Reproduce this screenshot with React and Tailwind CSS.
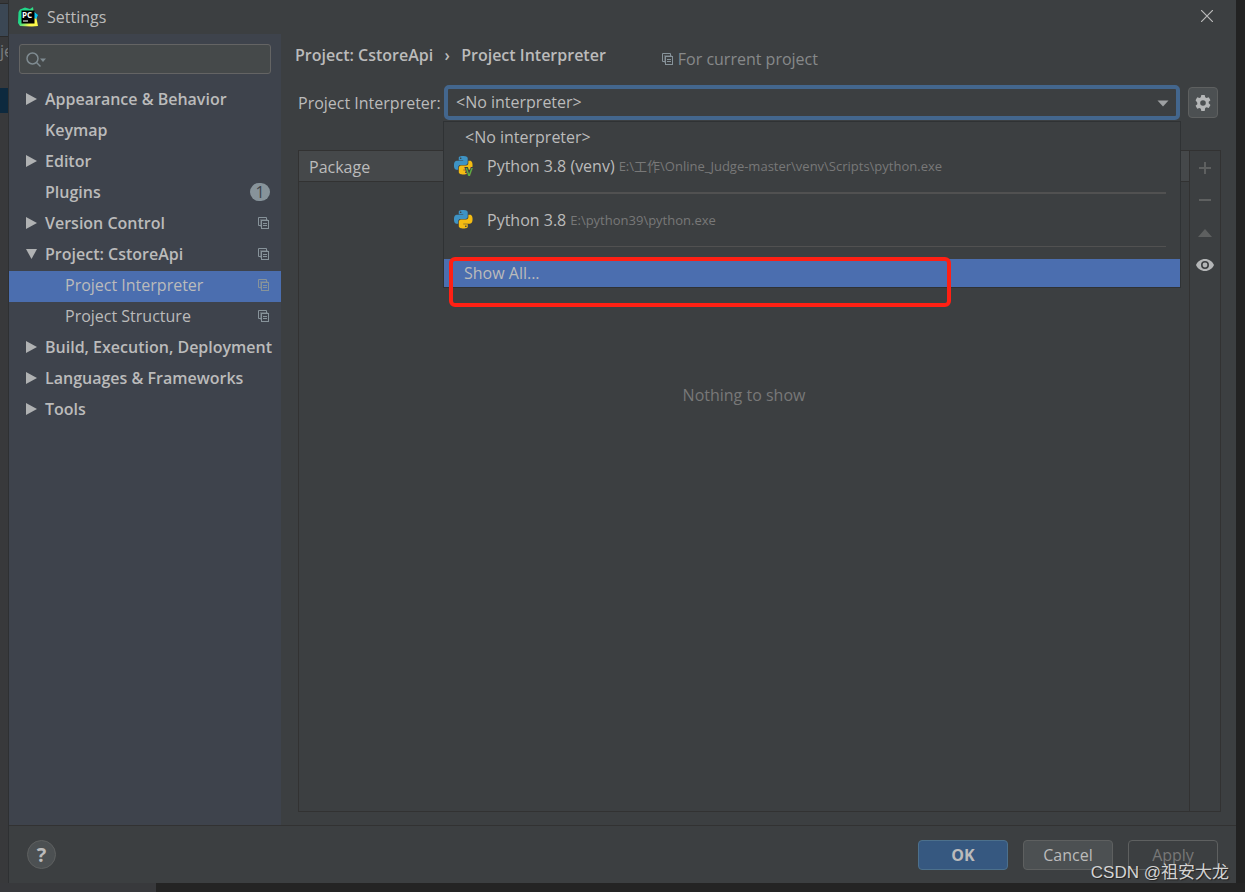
import { useState } from 'react';
import clsx from 'clsx';

const NAV = [
  { label: 'Appearance & Behavior', arrow: 'right' },
  { label: 'Keymap' },
  { label: 'Editor', arrow: 'right' },
  { label: 'Plugins', badge: 1 },
  { label: 'Version Control', arrow: 'right', perProject: true },
  { label: 'Project: CstoreApi', arrow: 'down', perProject: true },
  { label: 'Project Interpreter', child: true, perProject: true },
  { label: 'Project Structure', child: true, perProject: true },
  { label: 'Build, Execution, Deployment', arrow: 'right' },
  { label: 'Languages & Frameworks', arrow: 'right' },
  { label: 'Tools', arrow: 'right' },
];

function PyCharmIcon() {
  return (
    <svg className="w-5 h-5 shrink-0" viewBox="0 0 20 20">
      <defs>
        <linearGradient id="pc" x1="0" y1="0.2" x2="1" y2="1">
          <stop offset="0.35" stopColor="#21d789" />
          <stop offset="0.7" stopColor="#fcf84a" />
        </linearGradient>
      </defs>
      <path d="M2 2.500 7 .5l5 1.500L15 0l.5 4L19 8l-.5 3.500L20 19l-6 .5L2 19l-2-3L.5 5z" fill="url(#pc)" />
      <path d="M15.500 4.500 20 8l-2 4-2-1z" fill="#07c3f2" />
      <rect x="3.500" y="3.500" width="13" height="13" fill="#000" />
      <text x="4" y="10.500" fontSize="8" fontWeight="700" fontFamily="Open Sans, sans-serif" fill="#fff">PC</text>
      <rect x="5" y="13.500" width="5" height="1" fill="#fff" />
    </svg>
  );
}

function CopyIcon({ className }) {
  return (
    <svg className={clsx('w-3 h-3 shrink-0', className)} viewBox="0 0 12 12" fill="none" stroke="currentColor">
      <path d="M3 8.500H.5v-8h8V3" />
      <path d="M3 9.500h-.5v-7H9.500v1" opacity="0.45" />
      <rect x="3.500" y="3.500" width="7" height="8" />
      <path d="M5 6.500h4M5 8.500h4" />
    </svg>
  );
}

function Arrow({ dir }) {
  return (
    <svg className="w-3 h-3" viewBox="0 0 12 12" fill="#b0b2b3">
      {dir === 'down' ? <path d="M1 1h11L6.500 11z" /> : <path d="M1 0v12L12 6z" />}
    </svg>
  );
}

function PythonIcon({ venv }) {
  return (
    <svg className="w-5 h-5 shrink-0" viewBox="0 0 26 26">
      <path
        fill="#3e93c4"
        d="M14.25.18l.9.2.73.26.59.3.45.32.34.34.25.34.16.33.1.3.04.26.02.2-.01.13V8.5l-.05.63-.13.55-.21.46-.26.38-.3.31-.33.25-.35.19-.35.14-.33.1-.3.07-.26.04-.21.02H8.77l-.69.05-.59.14-.5.22-.41.27-.33.32-.27.35-.2.36-.15.37-.1.35-.07.32-.04.27-.02.21v3.06H3.17l-.21-.03-.28-.07-.32-.12-.35-.18-.36-.26-.36-.36-.35-.46-.32-.59-.28-.73-.21-.88-.14-1.05-.05-1.23.06-1.22.16-1.04.24-.87.32-.71.36-.57.4-.44.42-.33.42-.24.4-.16.36-.1.32-.05.24-.01h.16l.06.01h8.16v-.83H6.18l-.01-2.75-.02-.37.05-.34.11-.31.17-.28.25-.26.31-.23.38-.2.44-.18.51-.15.58-.12.64-.1.71-.06.77-.04.84-.02 1.27.05zm-6.3 1.98l-.23.33-.08.41.08.41.23.34.33.22.41.09.41-.09.33-.22.23-.34.08-.41-.08-.41-.23-.33-.33-.22-.41-.09-.41.09z"
      />
      <path
        fill="#f4bc12"
        d="M21.1 6.110l.28.06.32.12.35.18.36.27.36.35.35.47.32.59.28.73.21.88.14 1.04.05 1.23-.06 1.23-.16 1.04-.24.86-.32.71-.36.57-.4.45-.42.33-.42.24-.4.16-.36.09-.32.05-.24.02-.16-.01h-8.22v.82h5.840l.01 2.760.02.36-.05.34-.11.31-.17.29-.25.25-.31.24-.38.2-.44.17-.51.15-.58.13-.64.09-.71.07-.77.04-.84.01-1.270-.04-1.070-.14-.9-.2-.73-.25-.59-.3-.45-.33-.34-.34-.25-.34-.16-.33-.1-.3-.04-.25-.02-.2.01-.13v-5.340l.05-.64.13-.54.21-.46.26-.38.3-.32.33-.24.35-.2.35-.14.33-.1.3-.06.26-.04.21-.02.13-.01h5.840l.69-.05.59-.14.5-.21.41-.28.33-.32.27-.35.2-.36.15-.36.1-.35.07-.32.04-.28.02-.21V6.070h2.090l.14.01zm-6.470 14.250l-.23.33-.08.41.08.41.23.33.33.23.41.08.41-.08.33-.23.23-.33.08-.41-.08-.41-.23-.33-.33-.23-.41-.08-.41.08z"
      />
      {venv && (
        <text x="15" y="26" fontSize="15" fontFamily="Open Sans, sans-serif" fontWeight="600" fill="#62b543" stroke="#3c3f41" strokeWidth="2.500" paintOrder="stroke">V</text>
      )}
    </svg>
  );
}

function NavItem({ item, active, onClick }) {
  return (
    <li>
      <button
        onClick={onClick}
        className={clsx('w-full h-[31px] pl-4 pr-[11px] pb-1 flex items-center text-left', active && 'bg-[#4b6eaf]', !item.child && 'font-semibold')}
      >
        <span className={clsx('shrink-0', item.child ? 'w-10' : 'w-5')}>{item.arrow && <Arrow dir={item.arrow} />}</span>
        <span className="flex-1 whitespace-nowrap">{item.label}</span>
        {item.badge && <span className="w-5 h-[18px] rounded-full bg-[#87939a] text-[#3e434c] font-normal leading-[18px] text-center">{item.badge}</span>}
        {item.perProject && <CopyIcon className="text-[#87939a]" />}
      </button>
    </li>
  );
}

function Option({ icon, name, path }) {
  return (
    <li role="option" aria-selected="false" className="h-7 pl-[10px] flex items-center whitespace-nowrap">
      {icon}
      <span className="ml-[13px]">{name}</span>
      <span className="ml-1 text-[13px] text-[#787878]">{path}</span>
    </li>
  );
}

function InterpreterSelect() {
  return (
    <div className="relative flex-1">
      <select
        id="interpreter"
        className="block w-full h-[35px] appearance-none rounded-[5px] border-4 border-[#43668d] bg-[#3c3f41] pl-2 pb-px outline-none"
      >
        <option>&lt;No interpreter&gt;</option>
      </select>
      <svg className="absolute right-[11px] top-[15px] w-3 h-[7px] pointer-events-none" viewBox="0 0 12 7" fill="#9da0a2">
        <path d="M0.500 0.500h11L6 6.500z" />
      </svg>
      <ul role="listbox" aria-label="Interpreters" className="absolute z-10 -left-px -right-px top-9 border border-[#2f3234] bg-[#3c3f41]">
        <li role="option" aria-selected="false" className="h-[30px] pl-[21px] flex items-center">&lt;No interpreter&gt;</li>
        <Option icon={<PythonIcon venv />} name="Python 3.8 (venv)" path="E:\工作\Online_Judge-master\venv\Scripts\python.exe" />
        <li role="separator" className="h-[2px] my-3 ml-4 mr-[14px] bg-[#515151]" />
        <Option icon={<PythonIcon />} name="Python 3.8" path="E:\python39\python.exe" />
        <li role="separator" className="h-px my-3 ml-4 mr-[14px] bg-[#515151]" />
        <li role="option" aria-selected="true" className="relative h-7 pl-5 flex items-center bg-[#4b6eaf]">
          Show All...
          <span className="absolute left-[5px] -top-[2px] w-[502px] h-[50px] rounded-md border-4 border-[#ff2014]" />
        </li>
      </ul>
    </div>
  );
}

function PackageTable() {
  return (
    <div className="flex-1 ml-[3px] flex border border-[#323232]">
      <div className="flex-1 flex flex-col">
        <table className="w-full">
          <thead>
            <tr className="h-[30px] bg-[#45484a] border-b border-[#323232]">
              <th className="pl-[10px] pt-[2px] text-left font-normal">Package</th>
            </tr>
          </thead>
        </table>
        <p className="pt-[203px] text-center text-[#787878]">Nothing to show</p>
      </div>
      <div className="w-[31px] border-l border-[#323232] flex flex-col items-center">
        <button aria-label="Install" className="w-full h-[33px] flex items-center justify-center">
          <svg className="w-3 h-3" viewBox="0 0 12 12" stroke="#5e6060" strokeWidth="2"><path d="M6 0v12M0 6h12" /></svg>
        </button>
        <button aria-label="Uninstall" className="w-full h-8 flex items-center justify-center">
          <svg className="w-3 h-3" viewBox="0 0 12 12" stroke="#5e6060" strokeWidth="2"><path d="M0 6h12" /></svg>
        </button>
        <button aria-label="Upgrade" className="w-full h-[33px] flex items-center justify-center">
          <svg className="w-[14px] h-2" viewBox="0 0 14 8" fill="#5e6060"><path d="M0 8h14L7 0z" /></svg>
        </button>
        <button aria-label="Show early releases" className="w-full h-8 flex items-center justify-center">
          <svg className="w-[18px] h-3" viewBox="0 0 18 12">
            <path fillRule="evenodd" fill="#b4b6b7" d="M9 0c4 0 7.500 2.500 9 6-1.500 3.500-5 6-9 6S1.500 9.500 0 6c1.500-3.500 5-6 9-6zm0 2a4 4 0 1 0 0 8 4 4 0 0 0 0-8z" />
            <circle cx="9" cy="6" r="2.400" fill="#b4b6b7" />
          </svg>
        </button>
      </div>
    </div>
  );
}

export default function App() {
  const [selected, setSelected] = useState('Project Interpreter');

  return (
    <div className="relative h-screen flex flex-col overflow-hidden bg-[#242424] text-base leading-5 text-[#bbbbbb] font-['Open_Sans','Noto_Sans_CJK_SC',sans-serif]">
      <div className="flex-1 min-h-0 flex">
        {/* Editor window behind the dialog */}
        <div className="w-[9px] shrink-0 overflow-hidden bg-[#38393b] border-r border-[#2e3032]">
          <div className="mt-[3px] h-[34px] bg-[#3b4754] border-y border-[#2b2b2b]" />
          <div className="h-[51px] pt-1 text-[#7b7d7f]">je</div>
          <div className="h-[25px] bg-[#0d293e]" />
        </div>

        <div className="flex-1 min-w-0 flex flex-col bg-[#3c3f41]">
          {/* Title bar */}
          <header className="h-[34px] pl-[9px] pr-[23px] flex items-center">
            <PyCharmIcon />
            <h1 className="ml-[9px] flex-1">Settings</h1>
            <button aria-label="Close" className="pb-[2px]">
              <svg className="w-3 h-3" viewBox="0 0 12 12" stroke="#bbbbbb" strokeWidth="1.200"><path d="M0 0l12 12M12 0L0 12" /></svg>
            </button>
          </header>

          <div className="flex-1 min-h-0 flex">
            <aside className="w-[272px] shrink-0 bg-[#3e434c]">
              <div className="relative mx-[10px] mt-[10px]">
                <svg className="absolute left-[7px] top-2 w-5 h-4" viewBox="0 0 20 16" fill="none" stroke="#7f8b91" strokeWidth="1.500">
                  <circle cx="6.500" cy="6.500" r="5.500" />
                  <path d="M10.500 10.500l4 4" />
                  <path d="M14 6.500h6l-3 3.500z" fill="#7f8b91" stroke="none" />
                </svg>
                <input aria-label="Search settings" className="block w-full h-[30px] pl-8 rounded-[3px] border border-[#646464] bg-[#45494a] outline-none" />
              </div>
              <ul className="mt-[11px]">
                {NAV.map((item) => (
                  <NavItem key={item.label} item={item} active={item.label === selected} onClick={() => setSelected(item.label)} />
                ))}
              </ul>
            </aside>

            <main className="flex-1 min-w-0 pl-[14px] pr-[15px] pb-[13px] flex flex-col">
              <div className="pt-[11px] flex items-start">
                <h2 className="flex font-semibold">
                  <span>Project: CstoreApi</span>
                  <span className="w-7 text-center">›</span>
                  <span>Project Interpreter</span>
                </h2>
                <p className="ml-14 mt-1 flex items-center gap-1 text-[#87898a]">
                  <CopyIcon className="text-[#87939a]" />
                  For current project
                </p>
              </div>

              <div className="mt-4 pl-[3px] pr-[3px] flex items-center">
                <label htmlFor="interpreter" className="w-[146px] whitespace-nowrap">Project Interpreter:</label>
                <InterpreterSelect />
                <button aria-label="Interpreter options" className="ml-2 w-[30px] h-[31px] flex items-center justify-center rounded-[4px] border border-[#5e6060] bg-[#4c5052]">
                  <svg className="w-4 h-4" viewBox="0 0 16 16">
                    <path
                      fill="#b4b6b7"
                      fillRule="evenodd"
                      d="M6.300 0h3.400l.5 2.300 1.300.75 2.250-.75 1.700 2.950L13.700 6.850v1.500l1.750 1.600-1.700 2.950-2.250-.7-1.300.75L9.700 16H6.300l-.5-2.300-1.300-.75-2.250.75L.55 10.750 2.300 9.150v-1.500L.55 5.250l1.700-2.950 2.250.75 1.300-.75zM8 5.200a2.800 2.800 0 1 0 0 5.600 2.800 2.800 0 0 0 0-5.600z"
                    />
                  </svg>
                </button>
              </div>

              <div className="mt-[30px] flex-1 flex">
                <PackageTable />
              </div>
            </main>
          </div>

          {/* Footer */}
          <footer className="h-[58px] pl-[18px] pr-[18px] flex items-center border-t border-[#323232]">
            <button aria-label="Help" className="w-[29px] h-[29px] rounded-full border border-[#5e6060] bg-[#4c5052] text-xl leading-5 font-bold">?</button>
            <div className="ml-auto flex gap-[15px]">
              <button className="w-[90px] h-[30px] rounded-[4px] border border-[#4c708c] bg-[#365880] font-bold">OK</button>
              <button className="w-[90px] h-[30px] rounded-[4px] border border-[#5e6060] bg-[#4c5052]">Cancel</button>
              <button disabled className="w-[90px] h-[30px] rounded-[4px] border border-[#5e6060] text-[#777777]">Apply</button>
            </div>
          </footer>
        </div>

        <div className="w-[9px] shrink-0 bg-[#222222]" />
      </div>
      <div className="h-[9px] shrink-0">
        <div className="w-[156px] h-full bg-[#38393c]" />
      </div>

      {/* Watermark */}
      <span className="absolute right-4 bottom-[7px] text-[17px] leading-6 text-[#d4d4d4] [text-shadow:1px_1px_1px_#222] font-['Liberation_Sans','Noto_Sans_CJK_SC',sans-serif]">CSDN @祖安大龙</span>
    </div>
  );
}
